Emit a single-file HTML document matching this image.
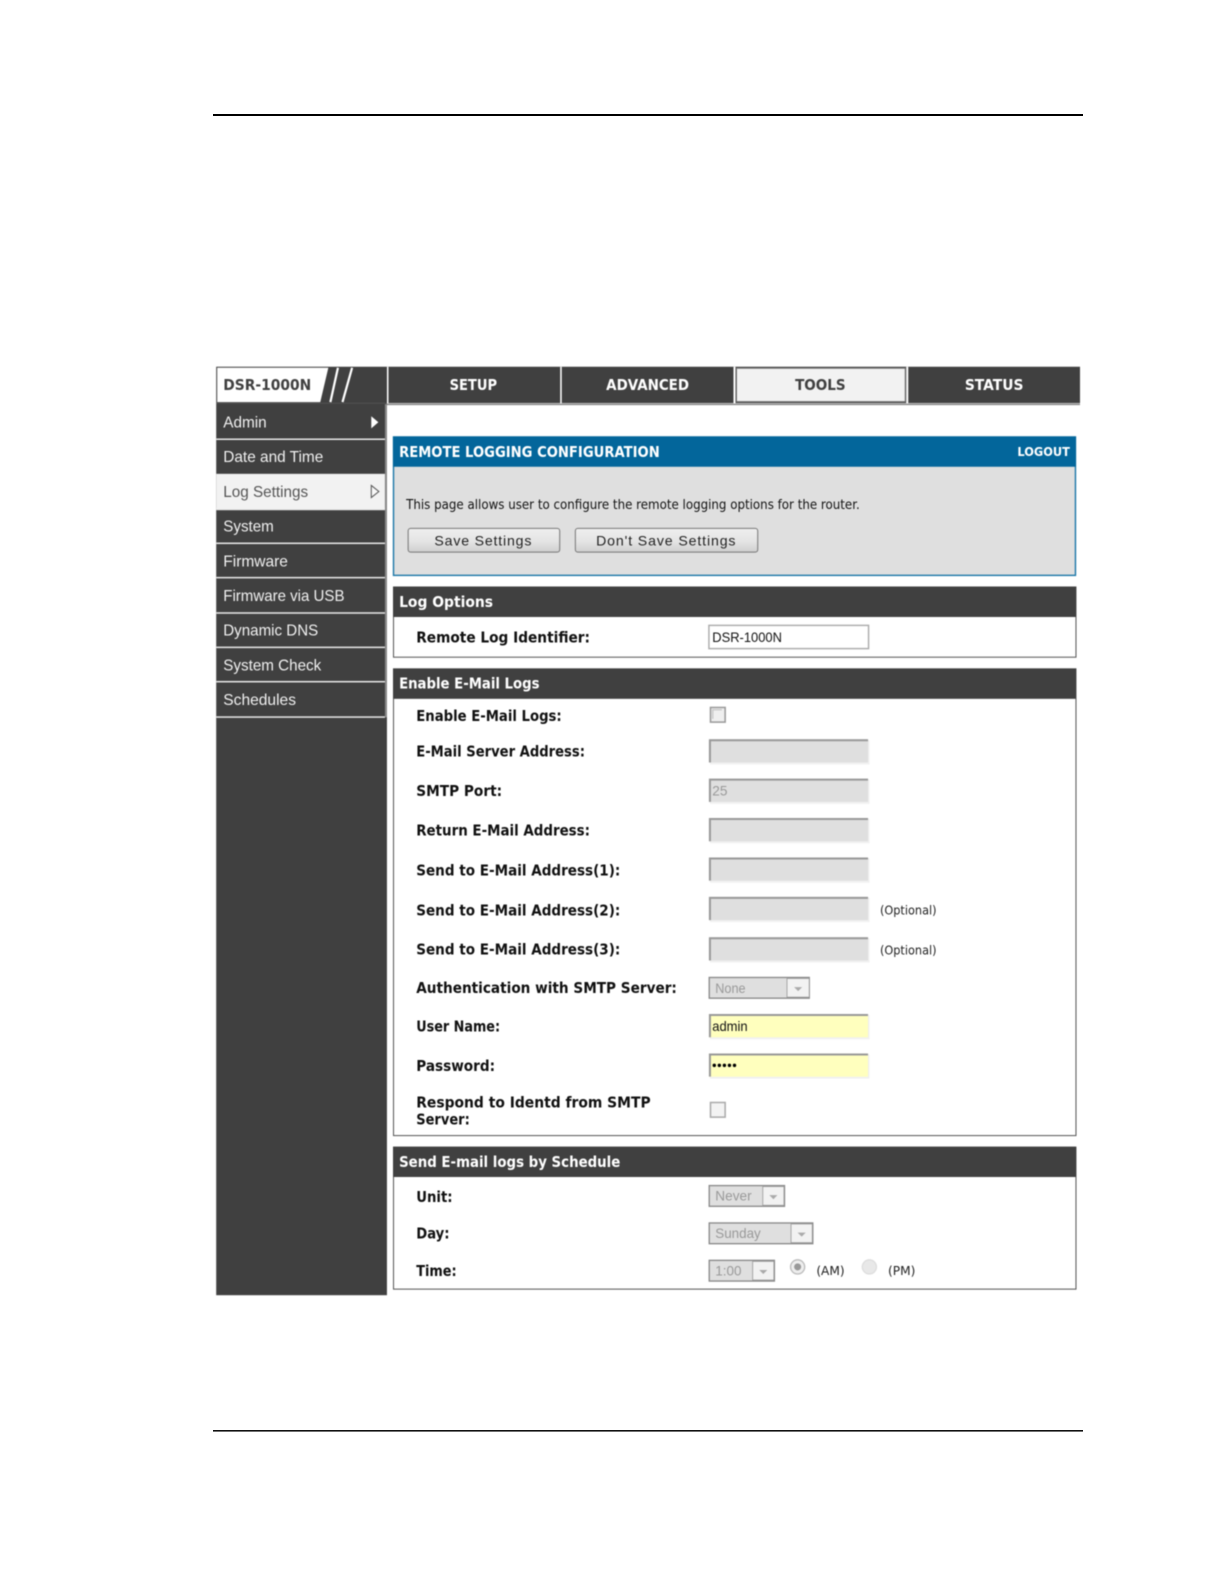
<!DOCTYPE html>
<html><head><meta charset="utf-8"><title>Remote Logging Configuration</title>
<style>
html,body{margin:0;padding:0;background:#fff;width:1224px;height:1584px;overflow:hidden}
svg{display:block}
text{font-family:"DejaVu Sans","Liberation Sans",sans-serif}
.b{font-weight:bold;font-size:14.5px;fill:#111}
.w{font-weight:bold;font-size:14.5px;fill:#fff}
.m{font-family:"Liberation Sans",sans-serif;font-size:15.5px;fill:#f0f0f0}
.s{font-family:"Liberation Sans",sans-serif;font-size:13.5px;fill:#111}
.g{font-family:"Liberation Sans",sans-serif;font-size:14px;fill:#999}
.o{font-size:12px;fill:#222}
</style></head><body>
<svg xmlns="http://www.w3.org/2000/svg" width="1224" height="1584" viewBox="0 0 1224 1584">
<rect x="213" y="114" width="870" height="2" fill="#000"/>
<rect x="213" y="1430" width="870" height="1.6" fill="#111"/>
<defs>
<linearGradient id="btn" x1="0" y1="0" x2="0" y2="1"><stop offset="0" stop-color="#efefef"/><stop offset=".55" stop-color="#e4e4e4"/><stop offset="1" stop-color="#cfcfcf"/></linearGradient>
<g id="dis"><rect x="1" y="1" width="158" height="24" fill="#f1f1f1"/><rect width="157.500" height="23" fill="#dfdfdf"/><path d="M1 23V1H157.500" fill="none" stroke="#999" stroke-width="2"/></g>
<g id="yel"><rect x="1" y="1" width="158" height="24" fill="#f1f1f1"/><rect width="157.500" height="23" fill="#ffffbe"/><path d="M1 23V1H157.500" fill="none" stroke="#999" stroke-width="2"/></g>
<g id="cb"><rect x=".75" y=".75" width="14.500" height="14.500" fill="#f3f3f3" stroke="#aaa" stroke-width="1.500"/></g>
<g id="cb2"><rect x=".75" y=".75" width="14.500" height="14.500" fill="#efefef" stroke="#999" stroke-width="1.500"/><path d="M3 12V3H12" fill="none" stroke="#ccc" stroke-width="1.500"/></g>
<path id="ar" d="M0 0H8L4 4Z" fill="#aaa"/>
</defs>
<g transform="scale(1.0103)" style="filter:blur(.45px)">
<!-- Header and sidebar -->
<rect x="214" y="363" width="855" height="36" fill="#404040"/>
<rect x="214" y="399" width="169" height="883" fill="#404040"/>
<rect x="381" y="400" width="2" height="310" fill="#8a8a8a"/>
<path d="M215 364H325L317 398H215Z" fill="#fff"/>
<path d="M334.500 364L327 398M348.500 364L339 398" stroke="#fff" stroke-width="2.200" fill="none"/>
<text x="221" y="386" class="b" style="fill:#404040" textLength="87" lengthAdjust="spacingAndGlyphs">DSR-1000N</text>
<rect x="383" y="363" width="1.500" height="37" fill="#fff"/>
<rect x="554.500" y="363" width="1.500" height="37" fill="#fff"/>
<rect x="726" y="363" width="2" height="37" fill="#fff"/>
<rect x="897" y="363" width="2" height="37" fill="#fff"/>
<rect x="383" y="399.500" width="686" height="1.500" fill="#8a8a8a"/>
<rect x="729" y="364.500" width="167" height="33" fill="#f2f2f2" stroke="#777" stroke-width="1"/>
<text x="445" y="386" class="w" textLength="47" lengthAdjust="spacingAndGlyphs">SETUP</text>
<text x="600" y="386" class="w" textLength="82" lengthAdjust="spacingAndGlyphs">ADVANCED</text>
<text x="787" y="386" class="b" style="fill:#404040" textLength="50" lengthAdjust="spacingAndGlyphs">TOOLS</text>
<text x="955" y="386" class="w" textLength="58" lengthAdjust="spacingAndGlyphs">STATUS</text>
<!-- Menu -->
<g fill="#e8e8e8">
<rect x="214" y="434" width="167" height="1.500"/>
<rect x="214" y="503" width="167" height="2"/>
<rect x="214" y="537" width="167" height="1.500"/>
<rect x="214" y="571" width="167" height="1.500"/>
<rect x="214" y="606" width="167" height="1.500"/>
<rect x="214" y="640" width="167" height="1.500"/>
<rect x="214" y="674" width="167" height="1.500"/>
<rect x="214" y="709" width="167" height="1.500"/>
</g>
<rect x="214" y="469" width="167" height="35" fill="#f2f2f2"/>
<text x="221" y="423" class="m" textLength="43" lengthAdjust="spacingAndGlyphs">Admin</text>
<text x="221" y="457.500" class="m" textLength="99" lengthAdjust="spacingAndGlyphs">Date and Time</text>
<text x="221" y="492" class="m" style="fill:#555" textLength="84" lengthAdjust="spacingAndGlyphs">Log Settings</text>
<text x="221" y="526" class="m" textLength="50" lengthAdjust="spacingAndGlyphs">System</text>
<text x="221" y="560.500" class="m" textLength="64" lengthAdjust="spacingAndGlyphs">Firmware</text>
<text x="221" y="595" class="m" textLength="120" lengthAdjust="spacingAndGlyphs">Firmware via USB</text>
<text x="221" y="629" class="m" textLength="94" lengthAdjust="spacingAndGlyphs">Dynamic DNS</text>
<text x="221" y="663.500" class="m" textLength="97" lengthAdjust="spacingAndGlyphs">System Check</text>
<text x="221" y="698" class="m" textLength="72" lengthAdjust="spacingAndGlyphs">Schedules</text>
<path d="M367.500 412L374.500 418L367.500 424Z" fill="#fff"/>
<path d="M367.500 480.500L375 486.500L367.500 492.500Z" fill="#f8f8f8" stroke="#555" stroke-width="1"/>
<!-- Blue panel -->
<rect x="389.500" y="432.500" width="675" height="137" fill="#dfdfdf" stroke="#1c77a8" stroke-width="1.400"/>
<rect x="389" y="432" width="676" height="30" fill="#03669b"/>
<text x="395" y="452.500" class="w" textLength="258" lengthAdjust="spacingAndGlyphs">REMOTE LOGGING CONFIGURATION</text>
<text x="1007" y="451.500" class="w" style="font-size:12px" textLength="52" lengthAdjust="spacingAndGlyphs">LOGOUT</text>
<text x="402" y="504" style="font-size:13.500px;fill:#111" textLength="449" lengthAdjust="spacingAndGlyphs">This page allows user to configure the remote logging options for the router.</text>
<rect x="404" y="523" width="150" height="23.500" rx="2.500" fill="url(#btn)" stroke="#777"/>
<rect x="569.500" y="523" width="180.500" height="23.500" rx="2.500" fill="url(#btn)" stroke="#777"/>
<text x="430" y="540" style="font-family:'Liberation Sans',sans-serif;font-size:14px;fill:#222" textLength="96">Save Settings</text>
<text x="590" y="540" style="font-family:'Liberation Sans',sans-serif;font-size:14px;fill:#222" textLength="138">Don't Save Settings</text>
<!-- Log options -->
<rect x="389.500" y="581" width="675.500" height="69.500" fill="#fff" stroke="#555"/>
<rect x="389" y="580.700" width="676" height="30" fill="#404040"/>
<text x="395" y="601" class="w" textLength="93" lengthAdjust="spacingAndGlyphs">Log Options</text>
<text x="412" y="636" class="b" textLength="172" lengthAdjust="spacingAndGlyphs">Remote Log Identifier:</text>
<rect x="701.700" y="619" width="158" height="23" fill="#fff" stroke="#aaa" stroke-width="1.400"/>
<text x="705" y="635.500" class="s" textLength="69" lengthAdjust="spacingAndGlyphs">DSR-1000N</text>
<!-- Email -->
<rect x="389.500" y="662" width="675.500" height="462" fill="#fff" stroke="#555"/>
<rect x="389" y="661.700" width="676" height="30" fill="#404040"/>
<text x="395" y="681.500" class="w" textLength="139" lengthAdjust="spacingAndGlyphs">Enable E-Mail Logs</text>
<text x="412" y="713.500" class="b" textLength="144" lengthAdjust="spacingAndGlyphs">Enable E-Mail Logs:</text>
<text x="412" y="749" class="b" textLength="167" lengthAdjust="spacingAndGlyphs">E-Mail Server Address:</text>
<text x="412" y="788" class="b" textLength="85" lengthAdjust="spacingAndGlyphs">SMTP Port:</text>
<text x="412" y="827" class="b" textLength="172" lengthAdjust="spacingAndGlyphs">Return E-Mail Address:</text>
<text x="412" y="866.500" class="b" textLength="202" lengthAdjust="spacingAndGlyphs">Send to E-Mail Address(1):</text>
<text x="412" y="906" class="b" textLength="202" lengthAdjust="spacingAndGlyphs">Send to E-Mail Address(2):</text>
<text x="412" y="945" class="b" textLength="202" lengthAdjust="spacingAndGlyphs">Send to E-Mail Address(3):</text>
<text x="412" y="983" class="b" textLength="258" lengthAdjust="spacingAndGlyphs">Authentication with SMTP Server:</text>
<text x="412" y="1021" class="b" textLength="83" lengthAdjust="spacingAndGlyphs">User Name:</text>
<text x="412" y="1060" class="b" textLength="78" lengthAdjust="spacingAndGlyphs">Password:</text>
<text x="412" y="1096" class="b" textLength="232" lengthAdjust="spacingAndGlyphs">Respond to Identd from SMTP</text>
<text x="412" y="1113" class="b" textLength="53" lengthAdjust="spacingAndGlyphs">Server:</text>
<use href="#cb2" x="702.500" y="699.500"/>
<use href="#dis" x="701.700" y="731.700"/>
<use href="#dis" x="701.700" y="770.700"/>
<text x="705" y="787.500" class="g" textLength="15" lengthAdjust="spacingAndGlyphs">25</text>
<use href="#dis" x="701.700" y="809.700"/>
<use href="#dis" x="701.700" y="848.700"/>
<use href="#dis" x="701.700" y="887.700"/>
<use href="#dis" x="701.700" y="927.700"/>
<text x="871" y="905" class="o" textLength="56" lengthAdjust="spacingAndGlyphs">(Optional)</text>
<text x="871" y="945" class="o" textLength="56" lengthAdjust="spacingAndGlyphs">(Optional)</text>
<rect x="702" y="967.500" width="99" height="20.500" fill="#dfdfdf" stroke="#888" stroke-width="1.300"/>
<rect x="779" y="968.500" width="22" height="18.500" fill="#f2f2f2" stroke="#999" stroke-width=".8"/>
<use href="#ar" x="786" y="977"/>
<text x="708" y="983" class="g" textLength="30" lengthAdjust="spacingAndGlyphs">None</text>
<use href="#yel" x="701.700" y="1003.700"/>
<use href="#yel" x="701.700" y="1042.700"/>
<text x="705" y="1020.500" class="s" textLength="35" lengthAdjust="spacingAndGlyphs">admin</text>
<g fill="#000"><circle cx="707" cy="1054.500" r="1.700"/><circle cx="712" cy="1054.500" r="1.700"/><circle cx="717" cy="1054.500" r="1.700"/><circle cx="722" cy="1054.500" r="1.700"/><circle cx="727" cy="1054.500" r="1.700"/></g>
<use href="#cb" x="702.500" y="1090.500"/>
<!-- Schedule -->
<rect x="389.500" y="1135.500" width="675.500" height="140.500" fill="#fff" stroke="#555"/>
<rect x="389" y="1135" width="676" height="30" fill="#404040"/>
<text x="395" y="1155" class="w" textLength="219" lengthAdjust="spacingAndGlyphs">Send E-mail logs by Schedule</text>
<text x="412" y="1189.500" class="b" textLength="36" lengthAdjust="spacingAndGlyphs">Unit:</text>
<text x="412" y="1226" class="b" textLength="33" lengthAdjust="spacingAndGlyphs">Day:</text>
<text x="412" y="1263" class="b" textLength="40" lengthAdjust="spacingAndGlyphs">Time:</text>
<rect x="702" y="1173.500" width="74.500" height="20.500" fill="#dfdfdf" stroke="#888" stroke-width="1.300"/>
<rect x="755" y="1174.500" width="21" height="18.500" fill="#f2f2f2" stroke="#999" stroke-width=".8"/>
<use href="#ar" x="761.500" y="1183"/>
<text x="708" y="1188.500" class="g" textLength="36" lengthAdjust="spacingAndGlyphs">Never</text>
<rect x="702" y="1210.500" width="102.500" height="20.500" fill="#dfdfdf" stroke="#888" stroke-width="1.300"/>
<rect x="783" y="1211.500" width="21" height="18.500" fill="#f2f2f2" stroke="#999" stroke-width=".8"/>
<use href="#ar" x="789.500" y="1220"/>
<text x="708" y="1225.500" class="g" textLength="45" lengthAdjust="spacingAndGlyphs">Sunday</text>
<rect x="702" y="1247.500" width="64.500" height="20.500" fill="#dfdfdf" stroke="#888" stroke-width="1.300"/>
<rect x="745" y="1248.500" width="21" height="18.500" fill="#f2f2f2" stroke="#999" stroke-width=".8"/>
<use href="#ar" x="751.500" y="1257"/>
<text x="708" y="1262.500" class="g" textLength="26" lengthAdjust="spacingAndGlyphs">1:00</text>
<circle cx="789.500" cy="1254" r="7" fill="#eee" stroke="#bbb" stroke-width="1.300"/>
<circle cx="789.500" cy="1254" r="3.500" fill="#999"/>
<circle cx="860.500" cy="1254" r="7" fill="#e8e8e8" stroke="#ddd" stroke-width="1.300"/>
<text x="808" y="1262" class="o" style="font-size:12.500px" textLength="28" lengthAdjust="spacingAndGlyphs">(AM)</text>
<text x="879" y="1262" class="o" style="font-size:12.500px" textLength="27" lengthAdjust="spacingAndGlyphs">(PM)</text>
</g>
</svg>
</body></html>
